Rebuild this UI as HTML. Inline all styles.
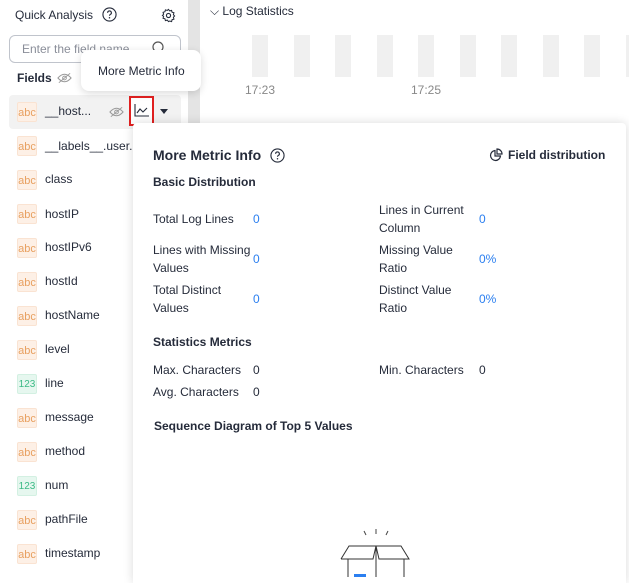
<!DOCTYPE html>
<html><head><style>
*{box-sizing:border-box;margin:0;padding:0}
body{width:629px;height:577px;overflow:hidden;background:#fff;font-family:"Liberation Sans",sans-serif;font-size:12px;color:#252b3a;position:relative}
.abs{position:absolute}
.ic{position:absolute;left:17px;width:20px;height:20px;border-radius:2px;background:#fdf0e6;color:#e8a060;font-size:11px;text-align:center;line-height:20px;border:1px solid #fae3d2}
.ic.n{background:#e6f7ef;color:#3cba86;border-color:#d3f0e2;font-size:10px}
.fn{position:absolute;left:45px;font-size:12px;color:#252b3a}
.bar{position:absolute;top:35px;width:16px;height:42px;background:#f0f0f0}
.lbl{position:absolute;color:#252b3a;line-height:18px}
.v{position:absolute;color:#2b7ff0}
</style></head><body>
<div class="abs" style="left:188px;top:0;width:12px;height:577px;background:#e4e4e4"></div>
<div class="abs" style="left:15px;top:8px;font-size:12px">Quick Analysis</div>
<svg class="abs" style="left:102px;top:7px" width="15" height="15" viewBox="0 0 16 16"><circle cx="8" cy="8" r="7" fill="none" stroke="#252b3a" stroke-width="1.2"/><path d="M6 6.2a2 2 0 1 1 2.8 1.8c-.6.3-.8.6-.8 1.3" fill="none" stroke="#252b3a" stroke-width="1.2"/><circle cx="8" cy="11.5" r=".8" fill="#252b3a"/></svg>
<svg class="abs" style="left:161px;top:8px" width="15" height="15" viewBox="0 0 16 16"><circle cx="8" cy="8" r="2.2" fill="none" stroke="#252b3a" stroke-width="1.2"/><path d="M8 1.5l1.3 1.6 2-.6.5 2 2 .6-.6 2 1.3 1.4-1.3 1.4.6 2-2 .6-.5 2-2-.6L8 14.5l-1.3-1.6-2 .6-.5-2-2-.6.6-2L1.5 8l1.3-1.4-.6-2 2-.6.5-2 2 .6z" fill="none" stroke="#252b3a" stroke-width="1.1"/></svg>
<div class="abs" style="left:9px;top:35px;width:172px;height:28px;border:1px solid #c0c4cc;border-radius:6px;color:#8a8e99;padding:6px 12px">Enter the field name</div>
<svg class="abs" style="left:152px;top:41px" width="14" height="14" viewBox="0 0 14 14"><circle cx="6" cy="6" r="5" fill="none" stroke="#555" stroke-width="1.2"/><path d="M10 10l3 3" stroke="#555" stroke-width="1.2"/></svg>
<div class="abs" style="left:17px;top:71px;font-weight:bold">Fields</div>
<svg class="abs" style="left:57px;top:72px" width="15" height="12" viewBox="0 0 16 12"><path d="M1 6q7-8 14 0q-7 8-14 0z" fill="none" stroke="#999" stroke-width="1.1"/><circle cx="8" cy="6" r="2" fill="none" stroke="#999"/><path d="M2 11L14 1" stroke="#999"/></svg>
<div class="abs" style="left:9px;top:95px;width:172px;height:34px;background:#f2f2f2;border-radius:4px"></div>
<svg class="abs" style="left:109px;top:106px" width="15" height="12" viewBox="0 0 16 12"><path d="M1 6q7-8 14 0q-7 8-14 0z" fill="none" stroke="#999" stroke-width="1.1"/><circle cx="8" cy="6" r="2" fill="none" stroke="#999"/><path d="M2 11L14 1" stroke="#999"/></svg>
<div class="abs" style="left:129px;top:96px;width:25px;height:30px;border:2px solid #e02020;background:#fff"></div>
<svg class="abs" style="left:134px;top:104px" width="15" height="13" viewBox="0 0 15 13"><path d="M1 0v12h14" fill="none" stroke="#252b3a" stroke-width="1.1"/><path d="M3 9l3-4 3 3 4-4" fill="none" stroke="#252b3a" stroke-width="1.1"/></svg>
<div class="abs" style="left:160px;top:109px;width:0;height:0;border-left:4px solid transparent;border-right:4px solid transparent;border-top:5px solid #252b3a"></div>
<div class="abs" style="left:81px;top:50px;width:120px;height:41px;background:#fff;border-radius:8px;box-shadow:0 2px 8px rgba(0,0,0,.15);padding:14px 17px;white-space:nowrap">More Metric Info</div>

<div class="ic" style="top:102px">abc</div><div class="fn" style="top:104px">__host...</div>
<div class="ic" style="top:136px">abc</div><div class="fn" style="top:139px">__labels__.user.</div>
<div class="ic" style="top:170px">abc</div><div class="fn" style="top:172px">class</div>
<div class="ic" style="top:204px">abc</div><div class="fn" style="top:207px">hostIP</div>
<div class="ic" style="top:238px">abc</div><div class="fn" style="top:240px">hostIPv6</div>
<div class="ic" style="top:272px">abc</div><div class="fn" style="top:274px">hostId</div>
<div class="ic" style="top:306px">abc</div><div class="fn" style="top:308px">hostName</div>
<div class="ic" style="top:340px">abc</div><div class="fn" style="top:342px">level</div>
<div class="ic n" style="top:374px">123</div><div class="fn" style="top:376px">line</div>
<div class="ic" style="top:408px">abc</div><div class="fn" style="top:410px">message</div>
<div class="ic" style="top:442px">abc</div><div class="fn" style="top:444px">method</div>
<div class="ic n" style="top:476px">123</div><div class="fn" style="top:478px">num</div>
<div class="ic" style="top:510px">abc</div><div class="fn" style="top:512px">pathFile</div>
<div class="ic" style="top:544px">abc</div><div class="fn" style="top:546px">timestamp</div>

<div class="abs" style="left:210px;top:4px">⌵ Log Statistics</div>
<div class="bar" style="left:252px"></div><div class="bar" style="left:294px"></div><div class="bar" style="left:335px"></div><div class="bar" style="left:377px"></div><div class="bar" style="left:418px"></div><div class="bar" style="left:460px"></div><div class="bar" style="left:501px"></div><div class="bar" style="left:543px"></div><div class="bar" style="left:584px"></div><div class="bar" style="left:626px"></div>
<div class="abs" style="left:245px;top:83px;color:#888">17:23</div>
<div class="abs" style="left:411px;top:83px;color:#888">17:25</div>

<div class="abs" style="left:133px;top:123px;width:493px;height:460px;background:#fff;box-shadow:0 0 10px rgba(0,0,0,.15);border-radius:4px 4px 0 0"></div>
<div class="abs" style="left:153px;top:147px;font-size:14px;font-weight:bold">More Metric Info</div>
<svg class="abs" style="left:270px;top:148px" width="15" height="15" viewBox="0 0 16 16"><circle cx="8" cy="8" r="7" fill="none" stroke="#252b3a" stroke-width="1.2"/><path d="M6 6.2a2 2 0 1 1 2.8 1.8c-.6.3-.8.6-.8 1.3" fill="none" stroke="#252b3a" stroke-width="1.2"/><circle cx="8" cy="11.5" r=".8" fill="#252b3a"/></svg>
<svg class="abs" style="left:489px;top:148px" width="14" height="14" viewBox="0 0 14 14"><path d="M6 2.5a5 5 0 1 0 5.5 5.5H6z" fill="none" stroke="#252b3a" stroke-width="1.2"/><path d="M8 1v5h5A5 5 0 0 0 8 1z" fill="none" stroke="#252b3a" stroke-width="1.2"/></svg>
<div class="abs" style="left:508px;top:148px;font-weight:bold">Field distribution</div>
<div class="abs" style="left:153px;top:175px;font-weight:bold">Basic Distribution</div>
<div class="lbl" style="left:153px;top:210px">Total Log Lines</div><div class="v" style="left:253px;top:212px">0</div>
<div class="lbl" style="left:379px;top:201px">Lines in Current<br>Column</div><div class="v" style="left:479px;top:212px">0</div>
<div class="lbl" style="left:153px;top:241px">Lines with Missing<br>Values</div><div class="v" style="left:253px;top:252px">0</div>
<div class="lbl" style="left:379px;top:241px">Missing Value<br>Ratio</div><div class="v" style="left:479px;top:252px">0%</div>
<div class="lbl" style="left:153px;top:281px">Total Distinct<br>Values</div><div class="v" style="left:253px;top:292px">0</div>
<div class="lbl" style="left:379px;top:281px">Distinct Value<br>Ratio</div><div class="v" style="left:479px;top:292px">0%</div>
<div class="abs" style="left:153px;top:335px;font-weight:bold">Statistics Metrics</div>
<div class="abs" style="left:153px;top:363px">Max. Characters</div><div class="abs" style="left:253px;top:363px">0</div>
<div class="abs" style="left:379px;top:363px">Min. Characters</div><div class="abs" style="left:479px;top:363px">0</div>
<div class="abs" style="left:153px;top:385px">Avg. Characters</div><div class="abs" style="left:253px;top:385px">0</div>
<div class="abs" style="left:154px;top:419px;font-weight:bold">Sequence Diagram of Top 5 Values</div>
<svg class="abs" style="left:338px;top:528px" width="82" height="49" viewBox="0 0 82 49"><path d="M26 3l2 4M38 1v5M50 3l-2 4" stroke="#444"/><path d="M3 31l8-13h52l8 13H41L38 18M11 18l-0 0M38 18l-3 13H3M10 31v18M66 31v18M38 18v31" fill="none" stroke="#333" stroke-width="1"/><rect x="16" y="46" width="12" height="3" fill="#2b7ff0"/></svg>
</body></html>
